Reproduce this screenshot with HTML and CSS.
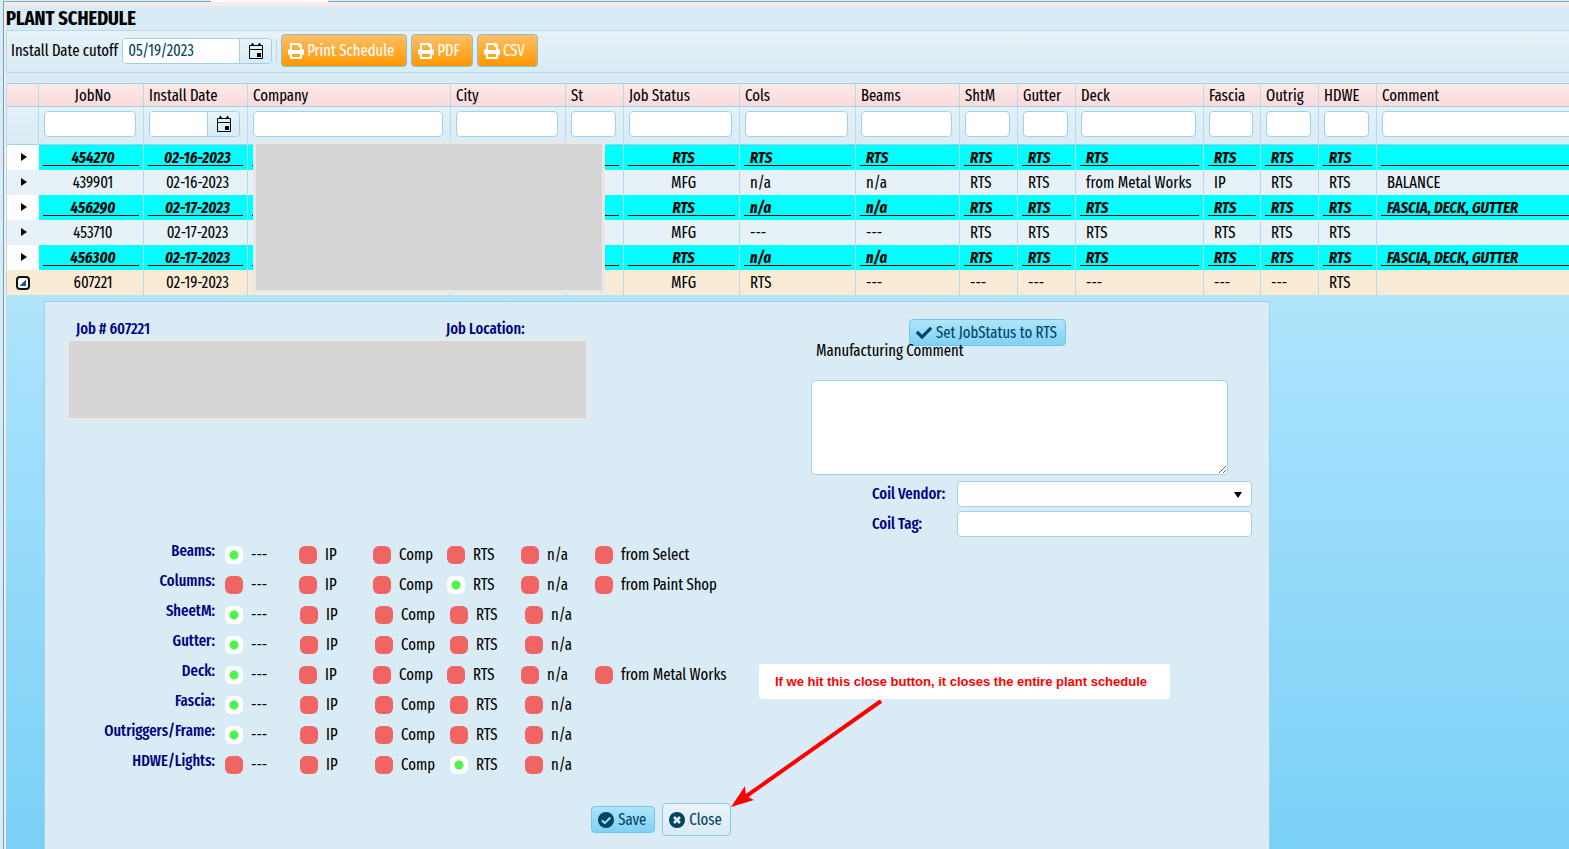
FILE: index.html
```
<!DOCTYPE html>
<html lang="en">
<head>
<meta charset="utf-8">
<title>Plant Schedule</title>
<link rel="stylesheet" href="styles.css">
</head>
<body>
<svg class="defs" aria-hidden="true">
  <symbol id="calendar" viewBox="0 0 16 16"><path fill="none" stroke="currentColor" d="M1.5 2.500h13v13h-13zM1.500 6.500h13"/><path d="M3 2h3M10 2h3M4.500 0v3M11.500 0v3" stroke="currentColor" stroke-width="1.500"/><path fill="currentColor" d="M9 10h4v4H9z"/></symbol>
  <symbol id="printer" viewBox="0 0 512 512"><path fill="currentColor" d="M448 192V77.250c0-8.490-3.370-16.620-9.370-22.630L393.370 9.370c-6-6-14.140-9.370-22.630-9.370H96C78.330 0 64 14.330 64 32v160c-35.350 0-64 28.650-64 64v112c0 8.840 7.160 16 16 16h48v96c0 17.670 14.330 32 32 32h320c17.670 0 32-14.330 32-32v-96h48c8.840 0 16-7.160 16-16V256c0-35.350-28.650-64-64-64zm-64 256H128v-96h256v96zm0-224H128V64h192v48c0 8.840 7.160 16 16 16h48v96z"/></symbol>
  <symbol id="check" viewBox="0 0 512 512"><path fill="currentColor" d="M173.900 439.400l-166.400-166.400c-10-10-10-26.200 0-36.200l36.200-36.200c10-10 26.200-10 36.200 0L192 312.690 432.100 72.600c10-10 26.200-10 36.200 0l36.200 36.200c10 10 10 26.200 0 36.200l-294.400 294.400c-10 10-26.200 10-36.200 0z"/></symbol>
  <symbol id="check-circle" viewBox="0 0 16 16"><circle cx="8" cy="8" r="8" fill="currentColor"/><path d="M3.800 8.200l3 3 5.600-5.700" fill="none" stroke="#a5dff8" stroke-width="2"/></symbol>
  <symbol id="times-circle" viewBox="0 0 16 16"><circle cx="8" cy="8" r="8" fill="currentColor"/><path d="M5 5l6 6M11 5l-6 6" fill="none" stroke="#e3f0f7" stroke-width="2.600"/></symbol>
</svg>

<div class="tabs"><div class="tab-side"></div><div class="tab"></div><div class="tab-rest"></div></div>
<main class="page">
  <h1 class="title">PLANT SCHEDULE</h1>

  <div class="toolbar">
    <label for="cutoff">Install Date cutoff</label>
    <div class="date date-cutoff"><input id="cutoff" type="text" value="05/19/2023"><button type="button" aria-label="Pick cutoff date"><svg class="icon"><use href="#calendar"/></svg></button></div>
    <span class="separator"></span>
    <button type="button" class="export"><svg class="icon"><use href="#printer"/></svg>Print Schedule</button>
    <button type="button" class="export"><svg class="icon"><use href="#printer"/></svg>PDF</button>
    <button type="button" class="export"><svg class="icon"><use href="#printer"/></svg>CSV</button>
  </div>

  <section class="grid">
    <table class="jobs">
      <colgroup><col class="w32"><col class="w105"><col class="w104"><col class="w203"><col class="w115"><col class="w58"><col class="w116"><col class="w116"><col class="w104"><col class="w58"><col class="w58"><col class="w128"><col class="w57"><col class="w58"><col class="w58"><col></colgroup>
      <thead>
        <tr class="heads"><th></th><th class="mid">JobNo</th><th>Install Date</th><th>Company</th><th>City</th><th>St</th><th>Job Status</th><th>Cols</th><th>Beams</th><th>ShtM</th><th>Gutter</th><th>Deck</th><th>Fascia</th><th>Outrig</th><th>HDWE</th><th>Comment</th></tr>
        <tr class="filters"><td></td>
          <td><input type="text" aria-label="Filter JobNo"></td>
          <td><div class="date"><input type="text" aria-label="Filter Install Date"><button type="button" aria-label="Pick install date"><svg class="icon"><use href="#calendar"/></svg></button></div></td>
          <td><input type="text" aria-label="Filter Company"></td>
          <td><input type="text" aria-label="Filter City"></td>
          <td><input type="text" aria-label="Filter St"></td>
          <td><input type="text" aria-label="Filter Job Status"></td>
          <td><input type="text" aria-label="Filter Cols"></td>
          <td><input type="text" aria-label="Filter Beams"></td>
          <td><input type="text" aria-label="Filter ShtM"></td>
          <td><input type="text" aria-label="Filter Gutter"></td>
          <td><input type="text" aria-label="Filter Deck"></td>
          <td><input type="text" aria-label="Filter Fascia"></td>
          <td><input type="text" aria-label="Filter Outrig"></td>
          <td><input type="text" aria-label="Filter HDWE"></td>
          <td><input type="text" aria-label="Filter Comment"></td>
        </tr>
      </thead>
      <tbody>
        <tr class="ready"><td><button type="button" class="expand" aria-label="Expand 454270"></button></td><td class="mid">454270</td><td class="mid">02-16-2023</td><td></td><td></td><td></td><td class="mid">RTS</td><td>RTS</td><td>RTS</td><td>RTS</td><td>RTS</td><td>RTS</td><td>RTS</td><td>RTS</td><td>RTS</td><td></td></tr>
        <tr><td><button type="button" class="expand" aria-label="Expand 439901"></button></td><td class="mid">439901</td><td class="mid">02-16-2023</td><td></td><td></td><td></td><td class="mid">MFG</td><td>n/a</td><td>n/a</td><td>RTS</td><td>RTS</td><td>from Metal Works</td><td>IP</td><td>RTS</td><td>RTS</td><td>BALANCE</td></tr>
        <tr class="ready"><td><button type="button" class="expand" aria-label="Expand 456290"></button></td><td class="mid">456290</td><td class="mid">02-17-2023</td><td></td><td></td><td></td><td class="mid">RTS</td><td>n/a</td><td>n/a</td><td>RTS</td><td>RTS</td><td>RTS</td><td>RTS</td><td>RTS</td><td>RTS</td><td>FASCIA, DECK, GUTTER</td></tr>
        <tr><td><button type="button" class="expand" aria-label="Expand 453710"></button></td><td class="mid">453710</td><td class="mid">02-17-2023</td><td></td><td></td><td></td><td class="mid">MFG</td><td>---</td><td>---</td><td>RTS</td><td>RTS</td><td>RTS</td><td>RTS</td><td>RTS</td><td>RTS</td><td></td></tr>
        <tr class="ready"><td><button type="button" class="expand" aria-label="Expand 456300"></button></td><td class="mid">456300</td><td class="mid">02-17-2023</td><td></td><td></td><td></td><td class="mid">RTS</td><td>n/a</td><td>n/a</td><td>RTS</td><td>RTS</td><td>RTS</td><td>RTS</td><td>RTS</td><td>RTS</td><td>FASCIA, DECK, GUTTER</td></tr>
        <tr class="open"><td><button type="button" class="collapse" aria-label="Collapse 607221"></button></td><td class="mid">607221</td><td class="mid">02-19-2023</td><td></td><td></td><td></td><td class="mid">MFG</td><td>RTS</td><td>---</td><td>---</td><td>---</td><td>---</td><td>---</td><td>---</td><td>RTS</td><td></td></tr>
      </tbody>
    </table>
    <div class="redacted redacted-company"></div>
  </section>

  <section class="detail">
    <form class="panel">
      <div class="columns">
        <div class="left">
          <div class="job-heads"><b>Job # 607221</b><b>Job Location:</b></div>
          <div class="redacted redacted-job"></div>
        </div>
        <div class="right">
          <button type="button" class="primary set-status"><svg class="icon"><use href="#check"/></svg>Set JobStatus to RTS</button>
          <label class="comment-label" for="comment">Manufacturing Comment</label>
          <textarea id="comment"></textarea>
          <div class="coil">
            <label for="vendor">Coil Vendor:</label><div class="picker"><select id="vendor"><option></option></select></div>
            <label for="tag">Coil Tag:</label><input id="tag" type="text">
          </div>
        </div>
      </div>

      <div class="statuses">
        <div class="row six" role="radiogroup" aria-label="Beams"><b>Beams:</b><label><input type="radio" name="beams" checked>---</label><label><input type="radio" name="beams">IP</label><label><input type="radio" name="beams">Comp</label><label><input type="radio" name="beams">RTS</label><label><input type="radio" name="beams">n/a</label><label><input type="radio" name="beams">from Select</label></div>
        <div class="row six" role="radiogroup" aria-label="Columns"><b>Columns:</b><label><input type="radio" name="columns">---</label><label><input type="radio" name="columns">IP</label><label><input type="radio" name="columns">Comp</label><label><input type="radio" name="columns" checked>RTS</label><label><input type="radio" name="columns">n/a</label><label><input type="radio" name="columns">from Paint Shop</label></div>
        <div class="row" role="radiogroup" aria-label="SheetM"><b>SheetM:</b><label><input type="radio" name="sheetm" checked>---</label><label><input type="radio" name="sheetm">IP</label><label><input type="radio" name="sheetm">Comp</label><label><input type="radio" name="sheetm">RTS</label><label><input type="radio" name="sheetm">n/a</label></div>
        <div class="row" role="radiogroup" aria-label="Gutter"><b>Gutter:</b><label><input type="radio" name="gutter" checked>---</label><label><input type="radio" name="gutter">IP</label><label><input type="radio" name="gutter">Comp</label><label><input type="radio" name="gutter">RTS</label><label><input type="radio" name="gutter">n/a</label></div>
        <div class="row six" role="radiogroup" aria-label="Deck"><b>Deck:</b><label><input type="radio" name="deck" checked>---</label><label><input type="radio" name="deck">IP</label><label><input type="radio" name="deck">Comp</label><label><input type="radio" name="deck">RTS</label><label><input type="radio" name="deck">n/a</label><label><input type="radio" name="deck">from Metal Works</label></div>
        <div class="row" role="radiogroup" aria-label="Fascia"><b>Fascia:</b><label><input type="radio" name="fascia" checked>---</label><label><input type="radio" name="fascia">IP</label><label><input type="radio" name="fascia">Comp</label><label><input type="radio" name="fascia">RTS</label><label><input type="radio" name="fascia">n/a</label></div>
        <div class="row" role="radiogroup" aria-label="Outriggers/Frame"><b>Outriggers/Frame:</b><label><input type="radio" name="outrig" checked>---</label><label><input type="radio" name="outrig">IP</label><label><input type="radio" name="outrig">Comp</label><label><input type="radio" name="outrig">RTS</label><label><input type="radio" name="outrig">n/a</label></div>
        <div class="row" role="radiogroup" aria-label="HDWE/Lights"><b>HDWE/Lights:</b><label><input type="radio" name="hdwe">---</label><label><input type="radio" name="hdwe">IP</label><label><input type="radio" name="hdwe">Comp</label><label><input type="radio" name="hdwe" checked>RTS</label><label><input type="radio" name="hdwe">n/a</label></div>
      </div>

      <div class="actions">
        <button type="button" class="primary"><svg class="icon"><use href="#check-circle"/></svg>Save</button>
        <button type="button" class="close"><svg class="icon"><use href="#times-circle"/></svg>Close</button>
      </div>

      <div class="note">If we hit this close button, it closes the entire plant schedule</div>
      <svg class="arrow" viewBox="0 0 152 108" aria-hidden="true"><path d="M150 1L14 97" stroke="#f00" stroke-width="4"/><path fill="#f00" d="M0 107L14 86L15 96L23 100Z"/></svg>
    </form>
  </section>
</main>
</body>
</html>
```
FILE: styles.css
```
* { box-sizing: border-box; }

body {
  margin: 0;
  min-height: 100vh;
  display: flex;
  flex-direction: column;
  overflow: hidden;
  background: #d9ebf5;
  color: #000;
  font: 16px/20px "Fira Sans Extra Condensed", "Fira Sans Condensed", "Roboto Condensed", sans-serif;
}

button, input, select, textarea { font: inherit; color: #004461; margin: 0; }
button { cursor: pointer; white-space: nowrap; }
input[type="text"], select, textarea {
  background: #fff;
  border: 1px solid #a2d0e6;
  border-radius: 4px;
  outline: 0;
}
.defs { position: absolute; width: 0; height: 0; }
.icon { width: 16px; height: 16px; flex: none; }

.tabs { display: flex; height: 2px; margin-left: 3px; }
.tab-side { width: 208px; border-bottom: 1px solid #6fb0cf; }
.tab { width: 117px; background: #fff; }
.tab-rest { flex: 1; border-bottom: 1px solid #6fb0cf; }

.page {
  flex: 1;
  display: flex;
  flex-direction: column;
  margin-left: 3px;
  padding: 4px 0 0 2px;
  border-left: 1px solid #5fa3c8;
  background: linear-gradient(#fbe9e8, #fbe9e8) 0 0 / 100% 4px no-repeat, linear-gradient(#fbe9e8, #fbe9e8) 0 0 / 2px 100% no-repeat;
}
.title { margin: 0; font-size: 20px; line-height: 24px; }

.toolbar {
  display: flex;
  align-items: center;
  height: 43px;
  padding: 0 0 2px 4px;
  border: 1px solid #b5dbec;
  border-right: 0;
  background: linear-gradient(#e6f2f8, #d9ebf5);
}
.date { display: flex; height: 26px; border: 1px solid #a2d0e6; border-radius: 4px; overflow: hidden; }
.date input[type="text"] { flex: 1; min-width: 0; border: 0; border-radius: 0; padding: 0 5px; }
.date button {
  width: 32px;
  display: flex;
  align-items: center;
  justify-content: center;
  border: 0;
  border-left: 1px solid #a2d0e6;
  background: linear-gradient(#e9f4f9, #d9ebf5);
  color: #000;
  padding: 0;
}
.date-cutoff { width: 150px; margin-left: 4px; }
.separator { width: 1px; height: 24px; margin: 0 4px; background: #b5dbec; }
.export {
  display: flex;
  align-items: center;
  gap: 3px;
  height: 33px;
  padding: 0 12px 0 6px;
  margin-right: 4px;
  border: 1px solid #85bfd6;
  border-radius: 4px;
  background: linear-gradient(#ffbf66, #ff9800);
  color: #fff;
}

.grid { position: relative; margin-top: 10px; }
.jobs { width: calc(100% + 20px); table-layout: fixed; border-collapse: separate; border-spacing: 0; border-left: 1px solid #b5dbec; }
.w32 { width: 32px; } .w57 { width: 57px; } .w58 { width: 58px; } .w104 { width: 104px; }
.w105 { width: 105px; } .w115 { width: 115px; } .w116 { width: 116px; } .w128 { width: 128px; } .w203 { width: 203px; }
.jobs th, .jobs td { border-right: 1px solid #b5dbec; white-space: nowrap; text-align: left; padding: 0; }
.jobs .heads th { height: 24px; padding: 1px 0 0 5px; font-weight: 400; background: linear-gradient(#fde9e9, #f9dada); border-top: 1px solid #a2d0e6; border-bottom: 1px solid #a2d0e6; }
.jobs .filters td { height: 38px; padding: 4px 7px 7px 5px; background: linear-gradient(#e3f1f8, #d9ebf5); border-bottom: 1px solid #a2d0e6; vertical-align: top; }
.filters td > input[type="text"] { display: block; width: 100%; height: 26px; }
.jobs tbody td { height: 25px; padding: 0 0 0 10px; line-height: 25px; background: #e6f1f8; }
.jobs .heads th.mid, .jobs tbody td.mid { text-align: center; padding-left: 4px; }
.jobs tbody td:first-child { padding: 0; text-align: center; border-right: 0; }
.jobs .ready td { line-height: 24px; font-weight: 700; font-style: italic; background: linear-gradient(#000, #000) 4px 20px / calc(100% - 8px) 1px no-repeat #0ff; }
.jobs .ready td:first-child { background: #fff; }
.jobs .open td { background: #faebd7; }

.expand { display: block; width: 20px; height: 20px; margin: 0 auto; padding: 0; border: 0; background: none; }
.expand::before { content: ""; display: block; margin: 0 0 2px 8px; border: 4px solid transparent; border-left: 6px solid #000; border-right: 0; }
.collapse { display: block; width: 14px; height: 14px; margin: 0 auto; padding: 2px; border: 2px solid #111; border-radius: 4px; background: #fff; }
.collapse::before { content: ""; display: block; width: 6px; height: 6px; background: linear-gradient(135deg, transparent 50%, #1c5a96 50%); }

.redacted { background: #d6d6d6; border: 3px solid #e8e8e8; }
.redacted-company { position: absolute; left: 247px; top: 58px; width: 352px; height: 152px; }

.detail { flex: 1; display: flex; padding: 6px 0 0 38px; background: linear-gradient(#b1e5fa, #a6e1fd 14%, #7ad0f6); }
.panel {
  position: relative;
  width: 80.4%;
  min-height: 548px;
  background: #d9ebf5;
  border: 1px solid #a2d0e6;
  border-bottom: 0;
}
.panel b { color: #000080; font-weight: 500; }
.columns { display: grid; grid-template-columns: minmax(0, 766px) minmax(0, 441px); min-height: 239px; }
.left { padding: 18px 0 0 21px; }
.job-heads { display: grid; grid-template-columns: 370px auto; padding-left: 10px; line-height: 18px; }
.redacted-job { width: 523px; max-width: 100%; height: 83px; }
.right { padding-top: 17px; display: flex; flex-direction: column; align-items: flex-start; }
.primary, .close {
  display: flex;
  align-items: center;
  gap: 4px;
  height: 27px;
  padding: 0 8px 0 6px;
  border: 1px solid #76c5e8;
  border-radius: 4px;
  background: linear-gradient(#aee4fa, #7fd2f6);
}
.set-status { margin-left: 98px; }
.comment-label { margin: -5px 0 0 5px; position: relative; }
textarea { display: block; width: 417px; max-width: 100%; height: 95px; margin-top: 19px; resize: both; }
.coil { width: 100%; display: grid; grid-template-columns: 85px 1fr; gap: 4px 0; padding: 6px 0 0 61px; color: #000080; font-weight: 500; }
.coil label { line-height: 26px; }
.coil input[type="text"], .coil select { display: block; width: 100%; height: 26px; padding: 0 8px; }
.picker { position: relative; }
.picker select { appearance: none; }
.picker::after { content: ""; position: absolute; right: 10px; top: 11px; border: 4px solid transparent; border-top: 6px solid #000; border-bottom: 0; pointer-events: none; }

.row { display: grid; grid-template-columns: 170px repeat(4, 75px) auto; height: 30px; }
.row.six { grid-template-columns: 170px repeat(5, 74px) auto; }
.row b { text-align: right; line-height: 20px; }
.row label { display: flex; align-items: center; gap: 8px; height: 28px; padding-left: 10px; white-space: nowrap; }
.row input {
  appearance: none;
  width: 18px;
  height: 18px;
  margin: 0;
  border-radius: 6px;
  background: #f06464;
}
.row input:checked { background: radial-gradient(circle, #4cf44c 4px, #fff 5px); }

.actions { display: flex; align-items: center; justify-content: center; gap: 7px; padding: 22px 0 12px 8px; }
.close { height: 33px; border-color: #90c6dc; background: linear-gradient(#e9f4f9, #d9ebf5); }

.note {
  position: absolute;
  left: 714px;
  top: 362px;
  padding: 8px 23px 8px 16px;
  background: #fff;
  border-radius: 3px;
  color: #f00;
  font: bold 13px/19px "Liberation Sans", Arial, sans-serif;
  white-space: nowrap;
}
.arrow { position: absolute; left: 686px; top: 398px; width: 152px; height: 108px; }
```
